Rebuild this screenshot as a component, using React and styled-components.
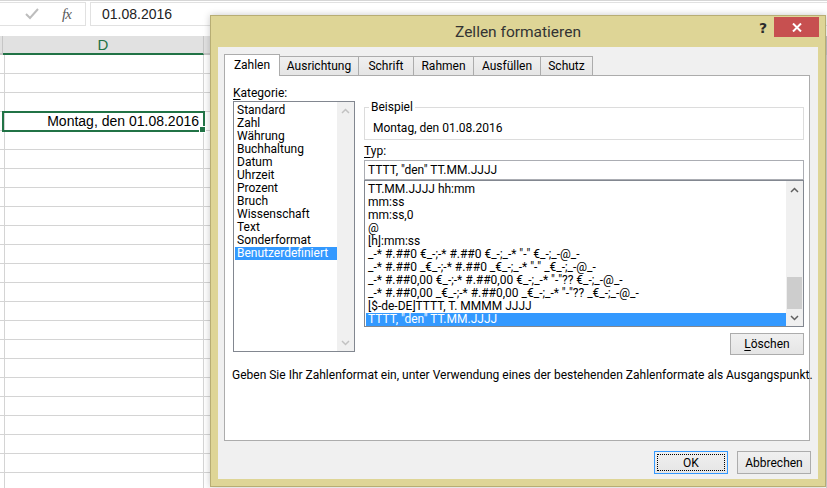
import React from 'react';
import styled, { createGlobalStyle, css } from 'styled-components';

const GlobalStyle = createGlobalStyle`
  html, body {
    margin: 0;
    padding: 0;
    background: #fff;
    overflow: hidden;
  }
  * {
    box-sizing: border-box;
  }
`;

const Screen = styled.div`
  position: relative;
  width: 827px;
  height: 488px;
  overflow: hidden;
  background: #fff;
  font-family: "Liberation Sans", Arial, sans-serif;
`;

/* ---------- excel sheet behind the dialog ---------- */

const FormulaBar = styled.div`
  display: flex;
  gap: 4px;
  height: 36px;
  padding: 1px 0 10px;
  border-top: 1px solid #d6d6d6;
`;

const FuncBox = styled.div`
  display: flex;
  align-items: center;
  width: 86px;
  padding-left: 25px;
  gap: 23px;
  border: 1px solid #e1e1e1;
  border-left: none;
  background: #fff;
`;

const FxLabel = styled.span`
  font-family: "Liberation Serif", "Times New Roman", serif;
  font-style: italic;
  font-size: 15px;
  color: #5a5a5a;
  letter-spacing: -1px;
`;

const FormulaInput = styled.div`
  flex: 1;
  border: 1px solid #e1e1e1;
  border-right: none;
  padding-left: 11px;
  font-size: 14px;
  line-height: 22px;
  color: #222;
`;

const SheetRow = styled.div`
  display: grid;
  grid-template-columns: 3px 201px 1fr;
  height: 19px;
`;

const Cell = styled.div`
  position: relative;
  border-right: 1px solid #d4d4d4;
  border-bottom: 1px solid #d4d4d4;
  font-size: 14px;
  line-height: 18px;
  text-align: right;
  padding-right: 4px;
  color: #000;
  white-space: nowrap;

  ${p =>
    p.header &&
    css`
      background: #e1e1e1;
      border-right-color: #c6c6c6;
      border-bottom: 2px solid ${p.active ? '#217346' : '#c6c6c6'};
      text-align: center;
      padding: 0;
      font-size: 15px;
      line-height: 17px;
      color: ${p.active ? '#217346' : '#444'};
    `}

  ${p =>
    p.selected &&
    css`
      outline: 2px solid #217346;
      outline-offset: -1px;
      z-index: 1;
      &::after {
        content: '';
        position: absolute;
        right: -3px;
        bottom: -3px;
        width: 5px;
        height: 5px;
        background: #217346;
        border: 1px solid #fff;
      }
    `}
`;

/* ---------- dialog ---------- */

const Dialog = styled.div`
  position: absolute;
  left: 210px;
  top: 15px;
  width: 616px;
  height: 472px;
  display: flex;
  flex-direction: column;
  background: #ded596;
  border: 1px solid #b7ad74;
  box-shadow: 0 0 7px rgba(0, 0, 0, 0.22);
  font-family: Roboto, "Noto Sans", sans-serif;
  font-size: 12px;
  color: #000;
`;

const TitleBar = styled.div`
  position: relative;
  height: 31px;
  text-align: center;
  font-size: 15.5px;
  line-height: 32px;
  color: #333;
`;

const HelpGlyph = styled.span`
  position: absolute;
  right: 58px;
  top: 2px;
  font-family: "DejaVu Sans", sans-serif;
  font-weight: bold;
  font-size: 14px;
  line-height: 20px;
  color: #2b2b2b;
`;

const CloseButton = styled.div`
  position: absolute;
  right: 6px;
  top: 1px;
  width: 45px;
  height: 20px;
  display: flex;
  align-items: center;
  justify-content: center;
  background: #c75050;
`;

const Client = styled.div`
  flex: 1;
  margin: 0 7px 7px;
  padding: 7px 8px 5px 6px;
  display: flex;
  flex-direction: column;
  background: #f0f0f0;
`;

const TabRow = styled.div`
  position: relative;
  z-index: 1;
  display: flex;
  align-items: flex-end;
  height: 21px;
`;

const Tab = styled.div`
  width: ${p => p.width}px;
  height: 19px;
  margin-left: -1px;
  padding-top: 1px;
  border: 1px solid #acacac;
  border-bottom: none;
  background: linear-gradient(#f0f0f0, #e5e5e5);
  text-align: center;
  line-height: 16px;

  &:first-child {
    margin-left: 0;
  }

  ${p =>
    p.active &&
    css`
      height: 22px;
      margin-bottom: -1px;
      padding-top: 2px;
      background: #fff;
    `}
`;

const Panel = styled.div`
  height: 366px;
  border: 1px solid #acacac;
  background: #fff;
  padding: 10px 5px 0 8px;
  display: grid;
  grid-template-columns: 122px 1fr;
  grid-template-rows: auto 1fr;
  column-gap: 9px;
`;

const Column = styled.div`
  display: flex;
  flex-direction: column;
`;

const Label = styled.div`
  line-height: 14px;
  margin-top: ${p => p.top || 0}px;
  margin-bottom: ${p => p.gap || 0}px;
`;

const Key = styled.span`
  text-decoration: underline;
  text-underline-offset: 2px;
`;

const ListBox = styled.div`
  display: flex;
  height: ${p => p.height}px;
  border: 1px solid #828790;
  background: #fff;
`;

const Items = styled.div`
  flex: 1;
  min-width: 0;
  padding: 2px 0 0 1px;
  overflow: hidden;
`;

const Item = styled.div`
  height: 13px;
  line-height: 13px;
  padding-left: 2px;
  white-space: nowrap;
  overflow: hidden;

  ${p =>
    p.selected &&
    css`
      background: #3399ff;
      color: #fff;
    `}
`;

const Scrollbar = styled.div`
  width: 17px;
  flex-shrink: 0;
  display: flex;
  flex-direction: column;
  background: #f0f0f0;
`;

const ArrowButton = styled.div`
  height: 17px;
  display: flex;
  align-items: center;
  justify-content: center;
`;

const Track = styled.div`
  flex: 1;
  display: flex;
  flex-direction: column;
  justify-content: flex-end;
  padding: 0 1px;
`;

const Thumb = styled.div`
  height: ${p => p.size}px;
  background: #cdcdcd;
`;

const Sample = styled.fieldset`
  margin: 14px 0 0;
  padding: 7px 8px 4px;
  border: 1px solid #dcdcdc;

  legend {
    padding: 0 2px;
    margin-left: -4px;
    line-height: 14px;
  }
`;

const SampleValue = styled.div`
  line-height: 14px;
`;

const TextInput = styled.div`
  height: 20px;
  border: 1px solid #abadb3;
  padding-left: 3px;
  line-height: 18px;
  background: #fff;
`;

const Button = styled.div`
  width: 74px;
  height: ${p => p.height || 23}px;
  border: 1px solid ${p => (p.primary ? '#3399ff' : '#acacac')};
  background: linear-gradient(#f0f0f0, #e5e5e5);
  display: flex;
  align-items: center;
  justify-content: center;
  position: relative;

  ${p =>
    p.primary &&
    css`
      &::after {
        content: '';
        position: absolute;
        inset: 2px;
        border: 1px dotted #000;
      }
    `}
`;

const Description = styled.div`
  grid-column: 1 / 3;
  margin: 13px 0 0 -1px;
  line-height: 14px;
  white-space: nowrap;
`;

const ButtonRow = styled.div`
  display: flex;
  justify-content: flex-end;
  gap: 9px;
  margin: ${p => p.top || 10}px ${p => (p.flush ? 0 : -1)}px 0 0;
`;

const Chevron = ({ down, color }) => (
  <svg width="9" height="6" viewBox="0 0 9 6">
    <polyline
      points={down ? '1,1 4.5,4.5 8,1' : '1,5 4.5,1.5 8,5'}
      fill="none"
      stroke={color}
      strokeWidth="1.5"
    />
  </svg>
);

const categories = [
  'Standard',
  'Zahl',
  'Währung',
  'Buchhaltung',
  'Datum',
  'Uhrzeit',
  'Prozent',
  'Bruch',
  'Wissenschaft',
  'Text',
  'Sonderformat',
  'Benutzerdefiniert',
];

const formats = [
  'TT.MM.JJJJ hh:mm',
  'mm:ss',
  'mm:ss,0',
  '@',
  '[h]:mm:ss',
  '_-* #.##0 €_-;-* #.##0 €_-;_-* "-" €_-;_-@_-',
  '_-* #.##0 _€_-;-* #.##0 _€_-;_-* "-" _€_-;_-@_-',
  '_-* #.##0,00 €_-;-* #.##0,00 €_-;_-* "-"?? €_-;_-@_-',
  '_-* #.##0,00 _€_-;-* #.##0,00 _€_-;_-* "-"?? _€_-;_-@_-',
  '[$-de-DE]TTTT, T. MMMM JJJJ',
  'TTTT, "den" TT.MM.JJJJ',
];

const tabs = [
  { label: 'Zahlen', width: 56 },
  { label: 'Ausrichtung', width: 80 },
  { label: 'Schrift', width: 56 },
  { label: 'Rahmen', width: 61 },
  { label: 'Ausfüllen', width: 68 },
  { label: 'Schutz', width: 53 },
];

export default function App() {
  const rows = Array.from({ length: 23 });

  return (
    <Screen>
      <GlobalStyle />

      <FormulaBar>
        <FuncBox>
          <svg width="14" height="12" viewBox="0 0 14 12">
            <polyline points="1,6 5,10 13,1" fill="none" stroke="#bdbdbd" strokeWidth="2" />
          </svg>
          <FxLabel>fx</FxLabel>
        </FuncBox>
        <FormulaInput>01.08.2016</FormulaInput>
      </FormulaBar>

      <SheetRow>
        <Cell header />
        <Cell header active>D</Cell>
        <Cell header />
      </SheetRow>
      {rows.map((_, i) => (
        <SheetRow key={i}>
          <Cell />
          <Cell selected={i === 3}>{i === 3 ? 'Montag, den 01.08.2016' : ''}</Cell>
          <Cell />
        </SheetRow>
      ))}

      <Dialog>
        <TitleBar>
          Zellen formatieren
          <HelpGlyph>?</HelpGlyph>
          <CloseButton>
            <svg width="10" height="9" viewBox="0 0 10 9">
              <path d="M1 0.5 L9 8.5 M9 0.5 L1 8.5" stroke="#fff" strokeWidth="2" />
            </svg>
          </CloseButton>
        </TitleBar>

        <Client>
          <TabRow>
            {tabs.map((t, i) => (
              <Tab key={t.label} width={t.width} active={i === 0}>
                {t.label}
              </Tab>
            ))}
          </TabRow>

          <Panel>
            <Column>
              <Label gap={1}>
                <Key>K</Key>ategorie:
              </Label>
              <ListBox height={251}>
                <Items>
                  {categories.map(c => (
                    <Item key={c} selected={c === 'Benutzerdefiniert'}>
                      {c}
                    </Item>
                  ))}
                </Items>
                <Scrollbar>
                  <ArrowButton>
                    <Chevron color="#c2c2c2" />
                  </ArrowButton>
                  <Track />
                  <ArrowButton>
                    <Chevron down color="#c2c2c2" />
                  </ArrowButton>
                </Scrollbar>
              </ListBox>
            </Column>

            <Column>
              <Sample>
                <legend>Beispiel</legend>
                <SampleValue>Montag, den 01.08.2016</SampleValue>
              </Sample>
              <Label gap={2} top={4}>
                <Key>T</Key>yp:
              </Label>
              <TextInput>TTTT, "den" TT.MM.JJJJ</TextInput>
              <ListBox height={147}>
                <Items>
                  {formats.map((f, i) => (
                    <Item key={f} selected={i === formats.length - 1}>
                      {f}
                    </Item>
                  ))}
                </Items>
                <Scrollbar>
                  <ArrowButton>
                    <Chevron color="#606060" />
                  </ArrowButton>
                  <Track>
                    <Thumb size={32} />
                  </Track>
                  <ArrowButton>
                    <Chevron down color="#606060" />
                  </ArrowButton>
                </Scrollbar>
              </ListBox>
              <ButtonRow top={6} flush>
                <Button height={22}>
                  <span>
                    <Key>L</Key>öschen
                  </span>
                </Button>
              </ButtonRow>
            </Column>

            <Description>
              Geben Sie Ihr Zahlenformat ein, unter Verwendung eines der bestehenden Zahlenformate als
              Ausgangspunkt.
            </Description>
          </Panel>

          <ButtonRow>
            <Button primary>OK</Button>
            <Button>Abbrechen</Button>
          </ButtonRow>
        </Client>
      </Dialog>
    </Screen>
  );
}
